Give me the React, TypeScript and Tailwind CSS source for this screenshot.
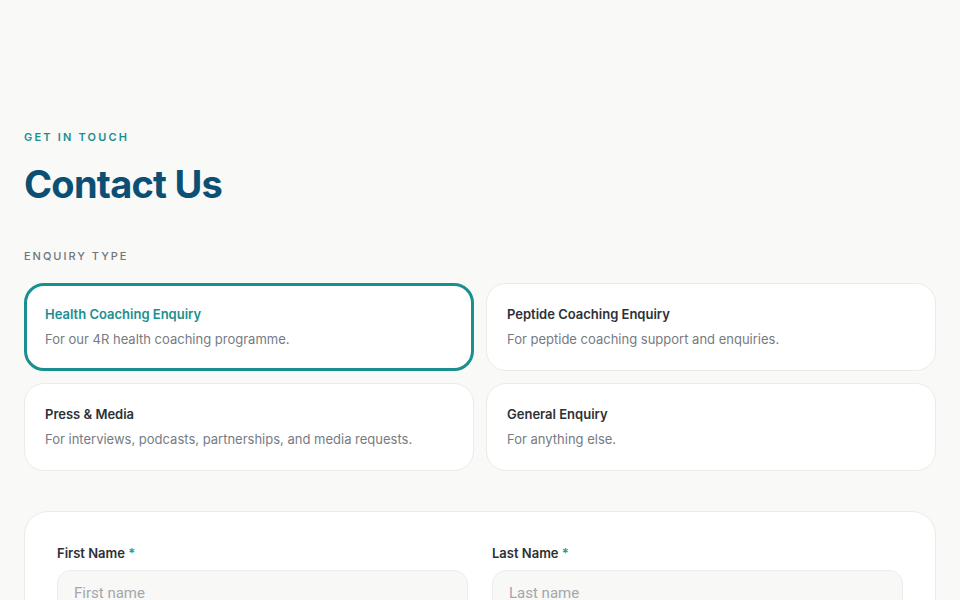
import { useState } from "react";

const enquiryTypes = [
  { id: "health", title: "Health Coaching Enquiry", desc: "For our 4R health coaching programme." },
  { id: "peptide", title: "Peptide Coaching Enquiry", desc: "For peptide coaching support and enquiries." },
  { id: "press", title: "Press & Media", desc: "For interviews, podcasts, partnerships, and media requests." },
  { id: "general", title: "General Enquiry", desc: "For anything else." },
];

const Field = ({ label, placeholder }: { label: string; placeholder: string }) => (
  <div className="flex flex-col gap-[7px]">
    <label className="text-[13px] leading-5 font-semibold text-[#2d3035]">
      {label} <span className="text-[#1a9b8c]">*</span>
    </label>
    <input
      placeholder={placeholder}
      className="h-[46px] rounded-[14px] border border-[#ecece9] bg-[#f8f8f6] px-4 text-[15px] text-[#2d3035] placeholder:text-[#a3a7ad] outline-none font-['Roboto',sans-serif]"
    />
  </div>
);

export default function App() {
  const [selected, setSelected] = useState("health");

  return (
    <div className="min-h-screen bg-[#f9f9f7] font-['Inter',sans-serif]">
      <div className="px-6 pt-[129px]">
        <p className="text-[11px] leading-4 font-semibold tracking-[0.2em] text-[#1a8f8f]">GET IN TOUCH</p>
        <h1 className="mt-[18px] text-[38px] leading-[42px] font-bold tracking-[-0.02em] text-[#0b4f75]">
          Contact Us
        </h1>
        <p className="mt-[43px] text-[11px] leading-4 font-medium tracking-[0.18em] text-[#6f747b]">ENQUIRY TYPE</p>

        <div className="mt-[19px] grid grid-cols-2 gap-3">
          {enquiryTypes.map((t) => {
            const active = t.id === selected;
            return (
              <button
                key={t.id}
                onClick={() => setSelected(t.id)}
                className={
                  active
                    ? "h-[88px] rounded-[20px] border-[3px] border-[#1a8f8f] bg-white px-[18px] pt-[17px] pb-[19px] text-left"
                    : "h-[88px] rounded-[20px] border border-[#ebebe8] bg-white px-[20px] pt-[19px] pb-[21px] text-left"
                }
              >
                <div className={active ? "text-[13px] leading-5 font-semibold text-[#1a8f8f]" : "text-[13px] leading-5 font-semibold text-[#2d3035]"}>
                  {t.title}
                </div>
                <div className="mt-[5px] text-[13px] leading-5 text-[#767b82]">{t.desc}</div>
              </button>
            );
          })}
        </div>

        <div className="mt-[40px] rounded-[24px] border border-[#ebebe8] bg-white px-8 pt-[31px] pb-8">
          <div className="grid grid-cols-2 gap-6">
            <Field label="First Name" placeholder="First name" />
            <Field label="Last Name" placeholder="Last name" />
          </div>
        </div>
      </div>
    </div>
  );
}
